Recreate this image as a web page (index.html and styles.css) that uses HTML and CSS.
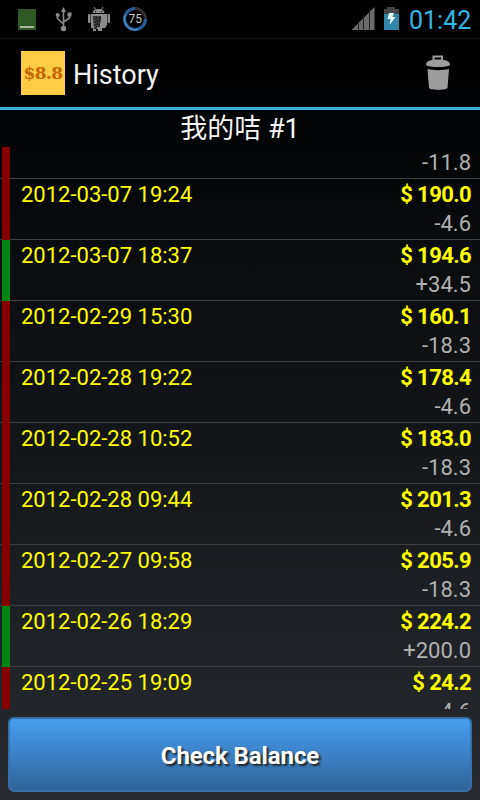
FILE: index.html
```html
<!DOCTYPE html>
<html lang="en">
<head>
    <meta charset="UTF-8">
    <meta name="viewport" content="width=device-width, initial-scale=1.0">
    <title>History</title>
    <link rel="stylesheet" href="styles.css">
</head>
<body>

<div class="screen">
    <!-- Status bar -->
    <div class="status-bar">
        <svg class="status-left" width="160" height="38" viewBox="0 0 160 38">
            <rect x="18" y="9" width="18" height="21" fill="#2f5a24"/>
            <rect x="20" y="26" width="14" height="2" fill="#a9b5a3"/>
            <!-- USB -->
            <g fill="none" stroke="#8c8c8c" stroke-width="1.6">
                <path d="M63.500 11V28M57.500 15V18.500L63.500 24M69.500 15V18L63.500 22"/>
            </g>
            <g fill="#8c8c8c">
                <path d="M63.500 7L66 12H61Z"/>
                <circle cx="63.500" cy="28.500" r="2.700"/>
                <circle cx="57.700" cy="15" r="2"/>
                <rect x="67.500" y="12.500" width="4" height="4"/>
            </g>
            <!-- Android robot -->
            <g fill="#8c8c8c">
                <path d="M92.500 13C93 10.500 95 9 98.500 9S104 10.500 104.500 13Z"/>
                <path d="M94 7L96 10M103 7L101 10" stroke="#8c8c8c"/>
                <path d="M91 14H107V25L105 28H102V31H98V29H96V31H93V28H91Z"/>
                <rect x="88" y="14" width="2.500" height="9" rx="1"/>
                <rect x="107.500" y="14" width="2.500" height="9" rx="1"/>
                <path d="M93 16H101V20L100 24V27H97V29H94Z" fill="#292929"/>
                <path d="M95 17V27M98 16V26" stroke="#777" stroke-dasharray="1 2"/>
            </g>
            <rect x="95" y="11" width="1" height="1" fill="#111"/>
            <rect x="101" y="11" width="1" height="1" fill="#111"/>
            <!-- Battery percentage ring -->
            <circle cx="135" cy="19" r="10.500" fill="none" stroke="#303030" stroke-width="3"/>
            <path d="M135 8.500A10.500 10.500 0 1 0 145.500 19" fill="none" stroke="#245b94" stroke-width="3"/>
            <path d="M125.500 15A10.200 10.200 0 0 0 138 29" fill="none" stroke="#4a8ac8" stroke-width="1.5"/>
            <text class="battery-text" x="135.300" y="23" text-anchor="middle">75</text>
        </svg>
        <div class="status-right">
            <svg width="50" height="26" viewBox="350 6 50 26">
                <path d="M351.500 30L374.500 7V30Z" fill="#6b6b6b"/>
                <path d="M358.500 20V30M363.500 15V30M369.500 10V30" stroke="#222" stroke-width="1"/>
                <path d="M384 9H387V7H395V9H399V15H384Z" fill="#444"/>
                <rect x="384" y="14" width="15" height="16" fill="#3085a8"/>
                <path d="M389 13H394L392.500 17H395.500L389.500 25L390.500 19H387.500Z" fill="#e8f4f8"/>
            </svg>
            <span class="clock">01:42</span>
        </div>
    </div>

    <!-- Action bar -->
    <div class="action-bar">
        <div class="app-icon">$8.8</div>
        <h1>History</h1>
        <svg class="trash" width="26" height="36" viewBox="0 0 26 36">
            <path d="M8.500 5V1.500H17V5" fill="none" stroke="#9d9d9d" stroke-width="2"/>
            <path d="M1 10C1 6 5 4.500 13 4.500S25 6 25 10C23 11.500 19 12 13 12S3 11.500 1 10Z" fill="#9d9d9d"/>
            <path d="M2.500 14C8 15.500 18 15.500 24 14L22.500 33C20 35.500 6 35.500 4 33Z" fill="#9d9d9d"/>
        </svg>
    </div>

    <h2>我的咭 #1</h2>

    <!-- Transactions -->
    <div class="list">
        <div class="row spend first">
            <div class="info"><div class="change">-11.8</div></div>
        </div>
        <div class="row spend">
            <div class="info">
                <div class="main"><span class="date">2012-03-07 19:24</span><b>$ 190.0</b></div>
                <div class="change">-4.6</div>
            </div>
        </div>
        <div class="row add">
            <div class="info">
                <div class="main"><span class="date">2012-03-07 18:37</span><b>$ 194.6</b></div>
                <div class="change">+34.5</div>
            </div>
        </div>
        <div class="row spend">
            <div class="info">
                <div class="main"><span class="date">2012-02-29 15:30</span><b>$ 160.1</b></div>
                <div class="change">-18.3</div>
            </div>
        </div>
        <div class="row spend">
            <div class="info">
                <div class="main"><span class="date">2012-02-28 19:22</span><b>$ 178.4</b></div>
                <div class="change">-4.6</div>
            </div>
        </div>
        <div class="row spend">
            <div class="info">
                <div class="main"><span class="date">2012-02-28 10:52</span><b>$ 183.0</b></div>
                <div class="change">-18.3</div>
            </div>
        </div>
        <div class="row spend">
            <div class="info">
                <div class="main"><span class="date">2012-02-28 09:44</span><b>$ 201.3</b></div>
                <div class="change">-4.6</div>
            </div>
        </div>
        <div class="row spend">
            <div class="info">
                <div class="main"><span class="date">2012-02-27 09:58</span><b>$ 205.9</b></div>
                <div class="change">-18.3</div>
            </div>
        </div>
        <div class="row add">
            <div class="info">
                <div class="main"><span class="date">2012-02-26 18:29</span><b>$ 224.2</b></div>
                <div class="change">+200.0</div>
            </div>
        </div>
        <div class="row spend">
            <div class="info">
                <div class="main"><span class="date">2012-02-25 19:09</span><b>$ 24.2</b></div>
                <div class="change">-4.6</div>
            </div>
        </div>
    </div>

    <button class="check-button">Check Balance</button>
</div>

</body>
</html>
```
FILE: styles.css
```css
* {
    margin: 0;
    padding: 0;
    box-sizing: border-box;
}

body {
    font-family: Roboto, "Noto Sans CJK TC", sans-serif;
    background-color: #000;
    color: #f3f3f3;
    overflow: hidden;
}

.screen {
    width: 480px;
    height: 800px;
    display: flex;
    flex-direction: column;
    background: linear-gradient(#000 38px, #020304 110px, #272b30);
}

/* Status bar */
.status-bar {
    height: 38px;
    flex: none;
    display: flex;
    justify-content: space-between;
    background-color: #000;
}

.status-right {
    display: flex;
    padding: 6px 9px 0 0;
}

.clock {
    width: 62px;
    margin-left: 9px;
    font-size: 25px;
    line-height: 29px;
    color: #33b5e5;
    white-space: nowrap;
}

.battery-text {
    font-size: 12px;
    fill: #c8c8c8;
}

/* Action bar */
.action-bar {
    height: 72px;
    flex: none;
    display: flex;
    align-items: center;
    padding: 0 29px 0 21px;
    border-top: 1px solid #111;
    border-bottom: 3px solid #3cb1dc;
}

.app-icon {
    width: 44px;
    height: 44px;
    background-color: #ffcc45;
    color: #c86400;
    font: bold 17px/44px "DejaVu Serif", serif;
    text-align: center;
    letter-spacing: -0.6px;
}

h1 {
    margin-left: 8px;
    padding-top: 4px;
    font-size: 27px;
    font-weight: normal;
}

.trash {
    margin-left: auto;
}

h2 {
    height: 37px;
    flex: none;
    font-size: 27px;
    font-weight: normal;
    line-height: 39px;
    text-align: center;
}

/* Transaction list */
.list {
    height: 562px;
    flex: none;
    overflow: hidden;
}

.row {
    height: 61px;
    display: flex;
    padding-left: 2px;
    background: linear-gradient(#3d3f41, #3d3f41) bottom / 100% 1px no-repeat;
}

.row::before {
    content: "";
    width: 8px;
    flex: none;
}

.spend::before {
    background-color: #850000;
}

.add::before {
    background-color: #008514;
}

.info {
    flex: 1;
    padding: 0 9px 0 11px;
    font-size: 22px;
}

.info b {
    letter-spacing: -0.6px;
}

.first {
    height: 32px;
}

.main {
    height: 31px;
    display: flex;
    justify-content: space-between;
    line-height: 32px;
    color: #ff0;
}

.change {
    line-height: 28px;
    text-align: right;
    color: #b0b0b0;
}

.first .change {
    line-height: 31px;
}

/* Button */
.check-button {
    height: 75px;
    flex: none;
    margin: 8px 8px 0;
    padding-top: 3px;
    border: 2px solid #3672a8;
    border-radius: 6px;
    background: linear-gradient(#489df0, #2f6499);
    color: #fff;
    font: bold 24px Roboto, sans-serif;
    letter-spacing: -0.1px;
    text-shadow: 2px 2px 2px #222;
}
```
